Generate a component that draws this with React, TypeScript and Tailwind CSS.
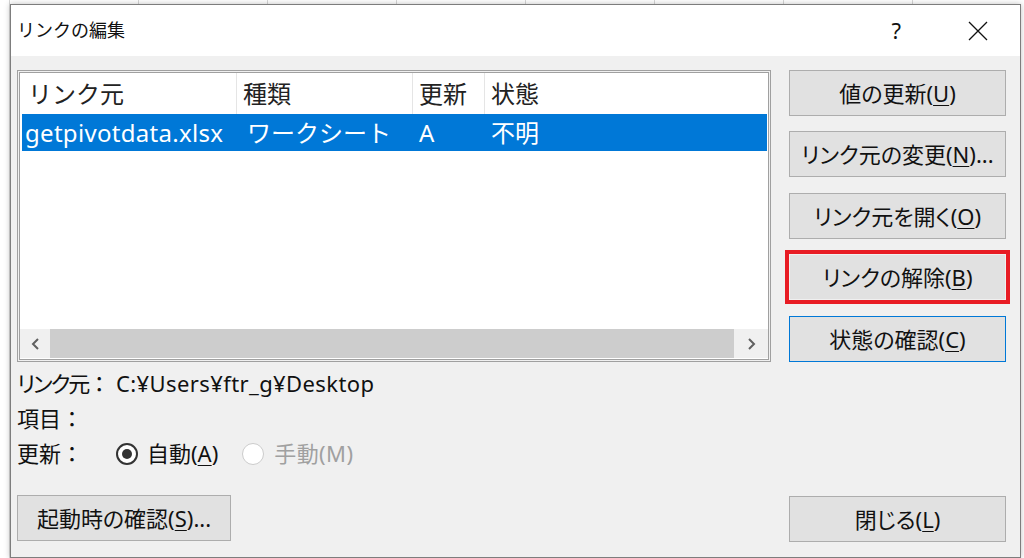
import { ReactNode } from "react";

const font = "font-['Noto_Sans','Noto_Sans_CJK_JP',sans-serif]";

function DlgButton({ children }: { children: ReactNode }) {
  return (
    <button
      type="button"
      className="flex h-[44px] w-full items-center justify-center bg-[#e1e1e1] text-[22px] text-[#111] [font-feature-settings:'palt']"
    >
      {children}
    </button>
  );
}

function Key({ k }: { k: string }) {
  return <span className="underline underline-offset-[3px] decoration-1">{k}</span>;
}

export default function App() {
  return (
    <div
      className={`h-[558px] w-[1024px] overflow-hidden bg-white bg-[repeating-linear-gradient(90deg,#d6d6d6_0_1px,transparent_1px_129px)] bg-[position:9px_0] pt-[4px] pl-[10px] ${font}`}
    >
      <div className="flex h-[554px] w-[1011px] flex-col border border-[#7d7d7d] bg-[#f0f0f0] shadow-[0_0_6px_rgba(0,0,0,0.25)]">
        {/* title bar */}
        <div className="flex h-[51px] shrink-0 items-center bg-white pl-[6px]">
          <span className="text-[18px] text-[#111]">リンクの編集</span>
          <span className="ml-auto mr-[67px] text-[22px] text-[#111]">?</span>
          <svg width="20" height="20" viewBox="0 0 20 20" className="mr-[32px]">
            <path d="M1 1L19 19M19 1L1 19" stroke="#111" strokeWidth="1.3" />
          </svg>
        </div>

        {/* body */}
        <div className="flex flex-1 pt-[14px] pl-[6px]">
          {/* left column */}
          <div className="flex w-[754px] flex-col">
            {/* list view */}
            <div className="h-[292px] border border-[#a0a0a0] p-px">
              <div className="flex h-full flex-col border border-[#a0a0a0] bg-white">
                <div className="flex h-[41px] shrink-0 items-center text-[24px] text-[#222]">
                  <div className="flex h-full w-[217px] items-center border-r border-[#e5e5e5] pl-[8px]">リンク元</div>
                  <div className="flex h-full w-[176px] items-center border-r border-[#e5e5e5] pl-[6px]">種類</div>
                  <div className="flex h-full w-[72px] items-center border-r border-[#e5e5e5] pl-[6px]">更新</div>
                  <div className="flex h-full flex-1 items-center pl-[6px]">状態</div>
                </div>
                <div className="ml-[2px] mr-px flex h-[37px] items-center bg-[#0078d7] text-[24px] text-white">
                  <div className="w-[214px] pl-[3px] tracking-[0.3px]">getpivotdata.xlsx</div>
                  <div className="w-[176px] pl-[11px]">ワークシート</div>
                  <div className="w-[72px] pl-[7px]">A</div>
                  <div className="flex-1 pl-[7px]">不明</div>
                </div>
                <div className="flex-1" />
                {/* horizontal scrollbar */}
                <div className="mb-[1px] flex h-[29px] shrink-0 bg-[#f0f0f0]">
                  <div className="flex w-[30px] items-center justify-center">
                    <svg width="9" height="12" viewBox="0 0 9 12">
                      <path d="M7 1L2 6L7 11" fill="none" stroke="#606060" strokeWidth="2" />
                    </svg>
                  </div>
                  <div className="w-[684px] bg-[#cdcdcd]" />
                  <div className="flex flex-1 items-center justify-center">
                    <svg width="9" height="12" viewBox="0 0 9 12">
                      <path d="M2 1L7 6L2 11" fill="none" stroke="#606060" strokeWidth="2" />
                    </svg>
                  </div>
                </div>
              </div>
            </div>

            {/* details */}
            <div className="mt-[4px] text-[22px] text-[#111]">
              <div className="flex h-[35px] items-center">
                <span className="w-[99px] shrink-0 whitespace-nowrap">
                  <span className="tracking-[-2px] [font-feature-settings:'palt']">リンク元</span>：
                </span>
                <span className="tracking-[0.4px]">C:¥Users¥ftr_g¥Desktop</span>
              </div>
              <div className="flex h-[35px] items-center">
                <span className="w-[99px] shrink-0">項目：</span>
              </div>
              <div className="flex h-[35px] items-center">
                <span className="w-[99px] shrink-0">更新：</span>
                <span className="flex h-[22px] w-[22px] items-center justify-center rounded-full border-2 border-[#333] bg-white">
                  <span className="h-[10px] w-[10px] rounded-full bg-[#333]" />
                </span>
                <span className="ml-[9px]">
                  自動(<Key k="A" />)
                </span>
                <span className="ml-[24px] h-[22px] w-[22px] rounded-full border-[1.5px] border-[#cccccc] bg-white" />
                <span className="ml-[10px] text-[#a0a0a0] tracking-[0.4px]">手動(M)</span>
              </div>
            </div>

            <div className="mt-[24px] w-[214px] border border-[#adadad]">
              <DlgButton>
                起動時の確認(<Key k="S" />)...
              </DlgButton>
            </div>
          </div>

          {/* right column */}
          <div className="ml-[18px] flex w-[217px] flex-col">
            <div className="border border-[#adadad]">
              <DlgButton>
                値の更新(<Key k="U" />)
              </DlgButton>
            </div>
            <div className="mt-[15px] border border-[#adadad]">
              <DlgButton>
                リンク元の変更(<Key k="N" />)...
              </DlgButton>
            </div>
            <div className="mt-[16px] border border-[#adadad]">
              <DlgButton>
                リンク元を開く(<Key k="O" />)
              </DlgButton>
            </div>
            <div className="mx-[-4px] mt-[11px] border-[4px] border-[#e81c24] p-px">
              <DlgButton>
                リンクの解除(<Key k="B" />)
              </DlgButton>
            </div>
            <div className="mt-[12px] border border-[#0078d7]">
              <DlgButton>
                状態の確認(<Key k="C" />)
              </DlgButton>
            </div>
            <div className="mt-[134px] border border-[#adadad]">
              <DlgButton>
                閉じる(<Key k="L" />)
              </DlgButton>
            </div>
          </div>
        </div>
      </div>
    </div>
  );
}
